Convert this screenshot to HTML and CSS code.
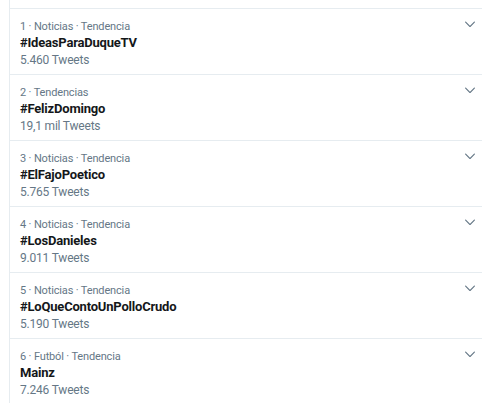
FILE: index.html
```html
<!DOCTYPE html>
<html lang="es">
<head>
<meta charset="utf-8">
<title>Tendencias</title>
<link rel="stylesheet" href="styles.css">
</head>
<body>
<div class="list">
  <div class="spacer"></div>
  <div class="trend">
    <div class="info">
      <div class="meta">1 · Noticias · Tendencia</div>
      <div class="name">#IdeasParaDuqueTV</div>
      <div class="count">5.460 Tweets</div>
    </div>
    <svg class="chev" viewBox="0 0 24 24"><path d="M20.207 8.147c-.39-.39-1.023-.39-1.414 0L12 14.940 5.207 8.147c-.39-.39-1.023-.39-1.414 0-.39.39-.39 1.023 0 1.414l7.5 7.5c.195.196.45.294.707.294s.512-.098.707-.293l7.5-7.5c.39-.39.39-1.022 0-1.413z"/></svg>
  </div>
  <div class="trend">
    <div class="info">
      <div class="meta">2 · Tendencias</div>
      <div class="name">#FelizDomingo</div>
      <div class="count">19,1 mil Tweets</div>
    </div>
    <svg class="chev" viewBox="0 0 24 24"><path d="M20.207 8.147c-.39-.39-1.023-.39-1.414 0L12 14.940 5.207 8.147c-.39-.39-1.023-.39-1.414 0-.39.39-.39 1.023 0 1.414l7.5 7.5c.195.196.45.294.707.294s.512-.098.707-.293l7.5-7.5c.39-.39.39-1.022 0-1.413z"/></svg>
  </div>
  <div class="trend">
    <div class="info">
      <div class="meta">3 · Noticias · Tendencia</div>
      <div class="name">#ElFajoPoetico</div>
      <div class="count">5.765 Tweets</div>
    </div>
    <svg class="chev" viewBox="0 0 24 24"><path d="M20.207 8.147c-.39-.39-1.023-.39-1.414 0L12 14.940 5.207 8.147c-.39-.39-1.023-.39-1.414 0-.39.39-.39 1.023 0 1.414l7.5 7.5c.195.196.45.294.707.294s.512-.098.707-.293l7.5-7.5c.39-.39.39-1.022 0-1.413z"/></svg>
  </div>
  <div class="trend">
    <div class="info">
      <div class="meta">4 · Noticias · Tendencia</div>
      <div class="name">#LosDanieles</div>
      <div class="count">9.011 Tweets</div>
    </div>
    <svg class="chev" viewBox="0 0 24 24"><path d="M20.207 8.147c-.39-.39-1.023-.39-1.414 0L12 14.940 5.207 8.147c-.39-.39-1.023-.39-1.414 0-.39.39-.39 1.023 0 1.414l7.5 7.5c.195.196.45.294.707.294s.512-.098.707-.293l7.5-7.5c.39-.39.39-1.022 0-1.413z"/></svg>
  </div>
  <div class="trend">
    <div class="info">
      <div class="meta">5 · Noticias · Tendencia</div>
      <div class="name">#LoQueContoUnPolloCrudo</div>
      <div class="count">5.190 Tweets</div>
    </div>
    <svg class="chev" viewBox="0 0 24 24"><path d="M20.207 8.147c-.39-.39-1.023-.39-1.414 0L12 14.940 5.207 8.147c-.39-.39-1.023-.39-1.414 0-.39.39-.39 1.023 0 1.414l7.5 7.5c.195.196.45.294.707.294s.512-.098.707-.293l7.5-7.5c.39-.39.39-1.022 0-1.413z"/></svg>
  </div>
  <div class="trend">
    <div class="info">
      <div class="meta">6 · Futból · Tendencia</div>
      <div class="name">Mainz</div>
      <div class="count">7.246 Tweets</div>
    </div>
    <svg class="chev" viewBox="0 0 24 24"><path d="M20.207 8.147c-.39-.39-1.023-.39-1.414 0L12 14.940 5.207 8.147c-.39-.39-1.023-.39-1.414 0-.39.39-.39 1.023 0 1.414l7.5 7.5c.195.196.45.294.707.294s.512-.098.707-.293l7.5-7.5c.39-.39.39-1.022 0-1.413z"/></svg>
  </div>
</div>
</body>
</html>
```

FILE: styles.css
```css
html, body {
  margin: 0;
  padding: 0;
  background: #ffffff;
  height: 100%;
  overflow: hidden;
}
body {
  font-family: Roboto, "Noto Sans", sans-serif;
}
.list {
  margin-left: 9px;
  border-left: 1px solid #e6ecf0;
  min-height: 100%;
}
.spacer {
  height: 8px;
  border-bottom: 1px solid #e6ecf0;
}
.trend {
  display: flex;
  align-items: flex-start;
  height: 65px;
  box-sizing: content-box;
  border-bottom: 1px solid #e6ecf0;
  padding: 0 5px 0 10px;
}
.info {
  flex: 1;
  padding-top: 10px;
}
.meta {
  font-size: 11px;
  line-height: 16px;
  letter-spacing: -0.15px;
  color: #657786;
}
.name {
  font-size: 13px;
  line-height: 16px;
  font-weight: 700;
  letter-spacing: -0.2px;
  color: #14171a;
}
.count {
  font-size: 12px;
  line-height: 18px;
  letter-spacing: -0.2px;
  color: #657786;
}
.chev {
  width: 14px;
  height: 14px;
  margin-top: 8px;
  fill: #657786;
}
```
